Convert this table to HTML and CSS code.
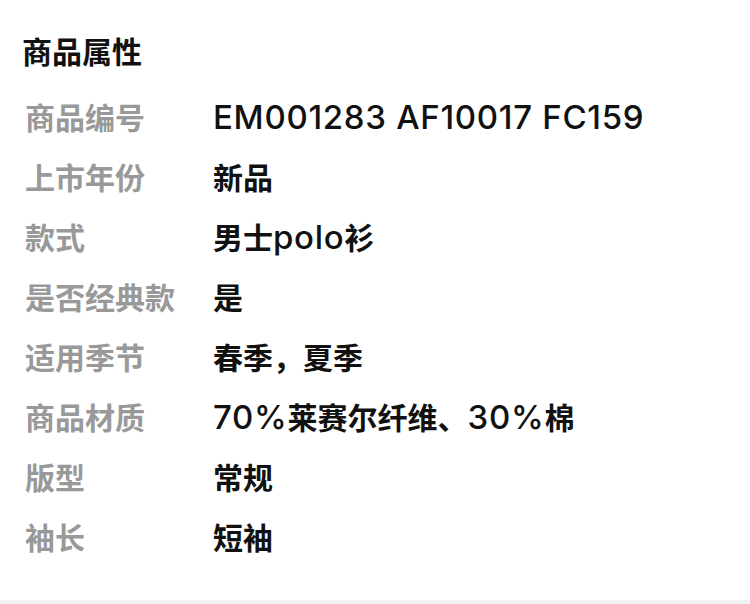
FILE: index.html
```html
<!DOCTYPE html>
<html lang="zh-CN">
<head>
    <meta charset="UTF-8">
    <meta name="viewport" content="width=device-width, initial-scale=1.0">
    <title>商品属性</title>
    <link rel="stylesheet" href="styles.css">
</head>
<body>
    <div class="attr-panel">
        <h2 class="attr-title">商品属性</h2>
        <div class="attr-list">
            <div class="attr-row">
                <span class="attr-label">商品编号</span>
                <span class="attr-value"><span class="latin">EM001283 AF10017 FC159</span></span>
            </div>
            <div class="attr-row">
                <span class="attr-label">上市年份</span>
                <span class="attr-value">新品</span>
            </div>
            <div class="attr-row">
                <span class="attr-label">款式</span>
                <span class="attr-value">男士<span class="latin">polo</span>衫</span>
            </div>
            <div class="attr-row">
                <span class="attr-label">是否经典款</span>
                <span class="attr-value">是</span>
            </div>
            <div class="attr-row">
                <span class="attr-label">适用季节</span>
                <span class="attr-value">春季，夏季</span>
            </div>
            <div class="attr-row">
                <span class="attr-label">商品材质</span>
                <span class="attr-value"><span class="latin">70%</span>莱赛尔纤维、<span class="latin">30%</span>棉</span>
            </div>
            <div class="attr-row">
                <span class="attr-label">版型</span>
                <span class="attr-value">常规</span>
            </div>
            <div class="attr-row">
                <span class="attr-label">袖长</span>
                <span class="attr-value">短袖</span>
            </div>
        </div>
    </div>
    <div class="page-bottom"></div>
</body>
</html>
```

FILE: styles.css
```css
body {
    font-family: "Noto Sans CJK SC", sans-serif;
    background-color: #fff;
    margin: 0;
}

.attr-panel {
    padding: 20px 22px 34px;
}

.attr-title {
    margin: 0 0 6px;
    font-size: 30px;
    line-height: 60px;
    font-weight: 700;
    color: #111;
}

.attr-row {
    display: flex;
    height: 60px;
    align-items: center;
    font-size: 30px;
}

.attr-label {
    width: 188px;
    padding-left: 3px;
    flex-shrink: 0;
    color: #999;
    font-weight: 700;
}

.attr-value {
    color: #111;
    font-weight: 700;
}

/* 英文数字用更宽的字体 */
.latin {
    font-family: Inter, "Noto Sans", sans-serif;
    font-size: 33px;
    font-weight: 520;
    letter-spacing: 0.7px;
}

.page-bottom {
    height: 8px;
    background-color: #f2f2f2;
}
```
